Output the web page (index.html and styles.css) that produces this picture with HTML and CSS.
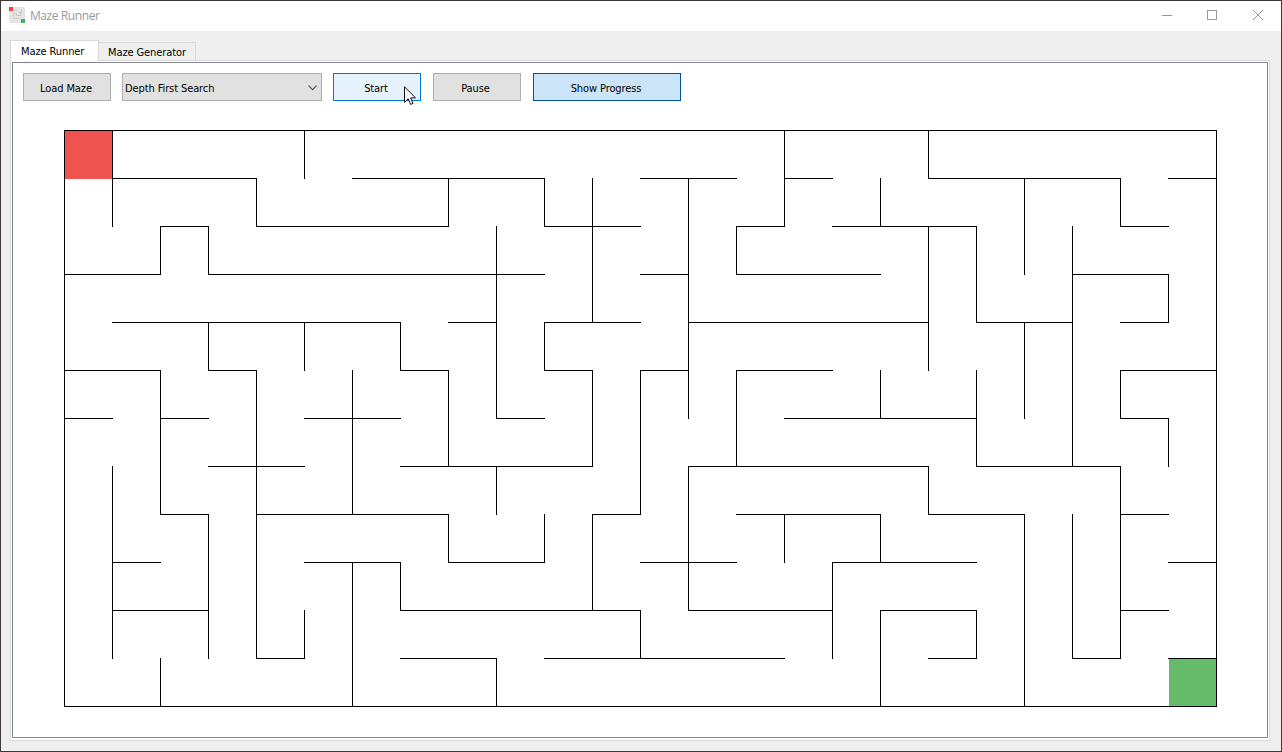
FILE: index.html
```html
<!DOCTYPE html>
<html lang="en">
<head>
<meta charset="utf-8">
<title>Maze Runner</title>
<link rel="stylesheet" href="styles.css">
</head>
<body>
<div class="window">
  <header class="titlebar">
    <svg class="app-icon" width="16" height="16" viewBox="0 0 16 16" shape-rendering="crispEdges">
      <rect width="16" height="16" fill="#e4e4e4"/>
      <path d="M5 3.500h3M12.500 2v4M4 6.500h3M7.500 6v3M10 5.500h2M11.500 5v4M3 8.500h2M8 8.500h3M4 11.500h6" fill="none" stroke="#cbcbcb"/>
      <rect width="4" height="4" fill="#ef4444"/>
      <rect x="12" y="12" width="4" height="4" fill="#43b163"/>
    </svg>
    <span class="title">Maze Runner</span>
    <div class="controls">
      <svg width="46" height="30" viewBox="0 0 46 30" shape-rendering="crispEdges"><path d="M19 14.500h10"/></svg>
      <svg width="46" height="30" viewBox="0 0 46 30" shape-rendering="crispEdges"><path d="M18.500 9.500h9v9h-9z"/></svg>
      <svg width="46" height="30" viewBox="0 0 46 30"><path d="M18 9l10 10M28 9l-10 10"/></svg>
    </div>
  </header>
  <main class="content">
    <nav class="tabs">
      <div class="tab tab-active"><span>Maze Runner</span></div>
      <div class="tab"><span>Maze Generator</span></div>
    </nav>
    <section class="pane">
      <div class="frame">
        <div class="toolbar">
          <button class="btn load"><span>Load Maze</span></button>
          <div class="select">
            <span>Depth First Search</span>
            <svg width="9" height="6" viewBox="0 0 9 6"><path d="M.5 .7l4 4 4-4" fill="none" stroke="#505050" stroke-width="1.100"/></svg>
          </div>
          <button class="btn start"><span>Start</span></button>
          <button class="btn pause"><span>Pause</span></button>
          <button class="btn progress"><span>Show Progress</span></button>
        </div>
        <svg class="maze" width="1153" height="577" viewBox="-0.5 -0.5 1153 577">
          <rect class="entry" x="-.5" y="-.5" width="49" height="49"/>
          <rect class="exit" x="1104.500" y="528.500" width="48" height="48"/>
          <g transform="scale(48)">
            <path class="wall" d="M0 0H24
              M1 1H4M6 1H10M12 1H14M15 1H16M18 1H22M23 1H24
              M2 2H3M4 2H8M10 2H12M14 2H15M16 2H19M22 2H23
              M0 3H2M3 3H10M12 3H13M14 3H17M21 3H23
              M1 4H7M8 4H9M10 4H12M13 4H18M19 4H21M22 4H23
              M0 5H2M3 5H4M7 5H8M10 5H11M12 5H13M14 5H16M22 5H24
              M0 6H1M2 6H3M5 6H7M9 6H10M15 6H19M22 6H23
              M3 7H5M7 7H11M13 7H18M19 7H22
              M2 8H3M4 8H8M11 8H12M14 8H17M18 8H20M22 8H23
              M1 9H2M5 9H7M8 9H10M12 9H14M16 9H19M23 9H24
              M1 10H3M7 10H12M13 10H16M17 10H19M22 10H23
              M4 11H5M7 11H9M10 11H15M18 11H19M21 11H22M23 11H24
              M0 12H24"/>
            <path class="wall" d="M0 0V12
              M1 0V2M1 7V11
              M2 2V3M2 5V8M2 11V12
              M3 2V3M3 4V5M3 8V11
              M4 1V2M4 5V11
              M5 0V1M5 4V5M5 10V11
              M6 5V8M6 9V12
              M7 4V5M7 9V10
              M8 1V2M8 5V7M8 8V9
              M9 2V6M9 7V8M9 11V12
              M10 1V2M10 4V5M10 8V9
              M11 1V4M11 5V7M11 8V10
              M12 5V8M12 10V11
              M13 1V6M13 7V10
              M14 2V3M14 5V7
              M15 0V2M15 8V9
              M16 9V11
              M17 1V2M17 5V6M17 8V9M17 10V12
              M18 0V1M18 2V5M18 7V8
              M19 2V4M19 5V7M19 10V11
              M20 1V3M20 4V6M20 8V12
              M21 2V7M21 8V11
              M22 1V2M22 5V6M22 7V11
              M23 3V4M23 6V7
              M24 0V12"/>
          </g>
        </svg>
      </div>
    </section>
  </main>
  <svg class="cursor" width="12" height="19" viewBox="0 0 12 19"><path d="M.5 .7V16.300L4.200 12.800 6.600 18.400 9 17.400 6.600 11.900H11.500Z" fill="#fff" stroke="#10101c"/></svg>
</div>
</body>
</html>
```
FILE: styles.css
```css
* { box-sizing: border-box; }
body {
  margin: 0;
  font: 11px/14px "DejaVu Sans Condensed", "DejaVu Sans", sans-serif;
  letter-spacing: -0.1px;
  color: #000;
}
span { white-space: nowrap; }
.window {
  position: relative;
  width: 1282px;
  height: 752px;
  border: 1px solid #3b393b;
  background: #efefef;
  display: flex;
  flex-direction: column;
}
.titlebar {
  height: 30px;
  flex: none;
  background: #fff;
  display: flex;
  align-items: center;
  padding-left: 8px;
}
.app-icon { margin-top: -2px; }
.title {
  margin-left: 5px;
  font: 12px/16px "Open Sans", sans-serif;
  letter-spacing: -0.42px;
  color: #999;
}
.controls { margin-left: auto; display: flex; }
.controls path { fill: none; stroke: #999; }
.content {
  flex: 1;
  padding: 9px 11px 10px 9px;
  display: flex;
  flex-direction: column;
}
.tabs { display: flex; height: 20px; align-items: flex-end; }
.tab {
  height: 18px;
  width: 97px;
  border: 1px solid #d9d9d9;
  border-left: 0;
  border-bottom: 0;
  padding: 3px 0 0 9px;
}
.tab-active {
  width: 89px;
  height: 21px;
  margin-bottom: -1px;
  border-left: 1px solid #d9d9d9;
  background: #fff;
  padding: 4px 0 0 10px;
  z-index: 1;
}
.pane {
  flex: 1;
  border: 1px solid #d9d9d9;
  background: #fff;
  padding: 1px 1px 2px;
  display: flex;
}
.frame { flex: 1; border: 1px solid #828790; padding: 10px; }
.toolbar { display: flex; height: 28px; }
.btn, .select {
  font: inherit;
  letter-spacing: inherit;
  color: #000;
  height: 28px;
  padding: 0;
  border: 1px solid #adadad;
  background: #e1e1e1;
  display: flex;
  align-items: center;
  justify-content: center;
  padding-top: 4px;
}
.load { width: 88px; padding-right: 2px; }
.select {
  width: 200px;
  margin-left: 11px;
  justify-content: space-between;
  padding-left: 2px;
  padding-right: 4px;
}
.select svg { margin-top: -2px; }
.start { width: 88px; margin-left: 11px; padding-right: 2px; border-color: #0078d7; background: #e5f1fb; }
.pause { width: 88px; margin-left: 12px; padding-right: 3px; }
.progress { width: 148px; margin-left: 12px; padding-right: 2px; border-color: #005499; background: #cce4f7; }
.maze { display: block; margin: 29px 0 0 41px; }
.entry { fill: #ef5350; }
.exit { fill: #66bb6a; }
.wall {
  fill: none;
  stroke: #000;
  stroke-width: 1px;
  stroke-linecap: square;
  vector-effect: non-scaling-stroke;
}
.cursor { position: absolute; left: 403px; top: 85px; }
```
